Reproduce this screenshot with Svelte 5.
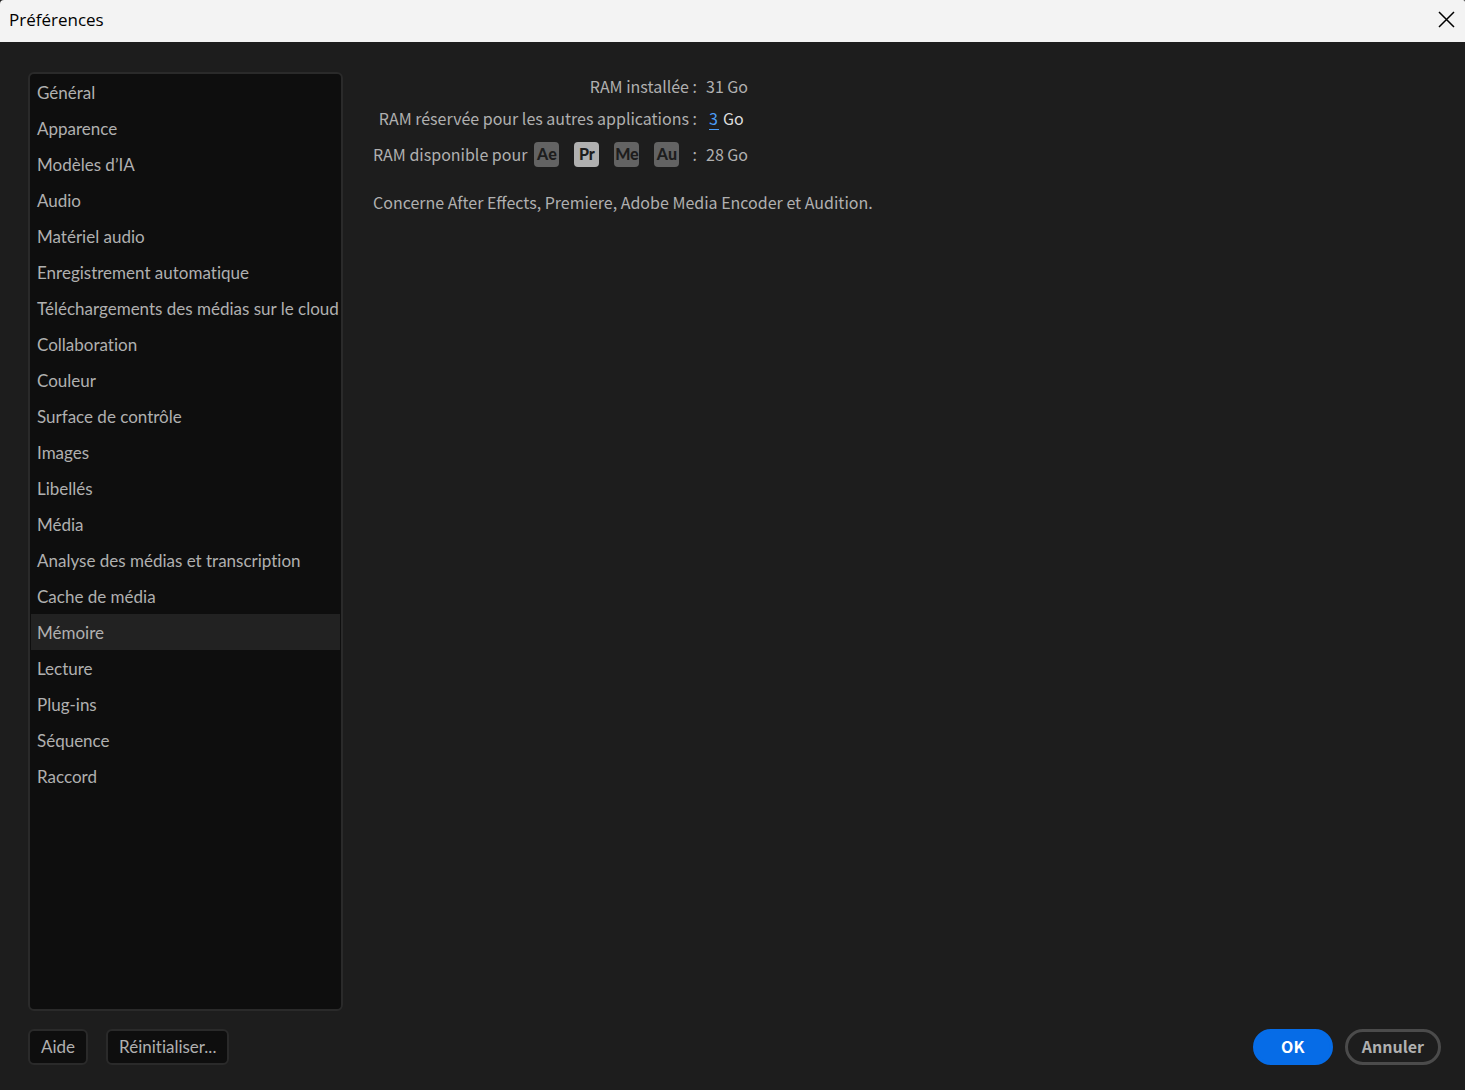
<script>
  const sections = [
    'Général',
    'Apparence',
    'Modèles d’IA',
    'Audio',
    'Matériel audio',
    'Enregistrement automatique',
    'Téléchargements des médias sur le cloud',
    'Collaboration',
    'Couleur',
    'Surface de contrôle',
    'Images',
    'Libellés',
    'Média',
    'Analyse des médias et transcription',
    'Cache de média',
    'Mémoire',
    'Lecture',
    'Plug-ins',
    'Séquence',
    'Raccord',
  ]
  const apps = ['Ae', 'Pr', 'Me', 'Au']
  const currentApp = 'Pr'
  const installed = 31

  let selected = $state('Mémoire')
  let reserved = $state('3')
  let available = $derived(installed - (parseInt(reserved) || 0))
</script>

<div class="window">
  <header class="titlebar">
    <h1>Préférences</h1>
    <button class="close" aria-label="Fermer">
      <svg width="17" height="17" viewBox="0 0 17 17" aria-hidden="true">
        <path d="M1 1l15 15M16 1L1 16" fill="none" stroke="currentColor" stroke-width="1.5" />
      </svg>
    </button>
  </header>

  <div class="body">
    <nav class="sections">
      {#each sections as section}
        <button
          class="section"
          class:selected={section === selected}
          onclick={() => (selected = section)}
        >
          {section}
        </button>
      {/each}
    </nav>

    <main>
      <div class="memory">
        <span class="label">RAM installée :</span>
        <span>{installed} Go</span>

        <label class="label" for="reserved">RAM réservée pour les autres applications :</label>
        <span class="reserved">
          <input id="reserved" type="text" inputmode="numeric" bind:value={reserved} />
          Go
        </span>

        <span class="label available">
          <span>RAM disponible pour</span>
          <span class="apps">
            {#each apps as app}
              <span class="app" class:current={app === currentApp}>{app}</span>
            {/each}
          </span>
          <span class="colon">:</span>
        </span>
        <span>{available} Go</span>
      </div>
      <p>Concerne After Effects, Premiere, Adobe Media Encoder et Audition.</p>
    </main>
  </div>

  <footer>
    <button class="small">Aide</button>
    <button class="small">Réinitialiser...</button>
    <span class="spacer"></span>
    <button class="pill primary">OK</button>
    <button class="pill">Annuler</button>
  </footer>
</div>

<style>
  :global(body) {
    background: #1d1d1d;
  }

  .window {
    box-sizing: border-box;
    min-height: 100vh;
    display: flex;
    flex-direction: column;
    background: #1d1d1d;
    color: #b0b0b0;
    font-family: Lato, 'Noto Sans', sans-serif;
    font-size: 17px;
    line-height: 24px;
  }

  button,
  input {
    font: inherit;
    color: inherit;
    margin: 0;
  }

  .titlebar {
    display: flex;
    align-items: center;
    justify-content: space-between;
    height: 42px;
    padding: 0 10px 3px 9px;
    box-sizing: border-box;
    border-radius: 4px 2px 0 0;
    background: #f3f3f3;
    color: #000;
  }

  h1 {
    margin: 0;
    font-family: 'Open Sans', 'Noto Sans', sans-serif;
    font-size: 17px;
    font-weight: 400;
  }

  .close {
    display: flex;
    padding: 0;
    border: 0;
    background: none;
  }

  .body {
    flex: 1;
    display: flex;
    gap: 30px;
    padding: 30px 28px 0;
  }

  .sections {
    flex: none;
    box-sizing: border-box;
    width: 315px;
    display: flex;
    flex-direction: column;
    padding: 0 1px;
    border: 2px solid #2a2a2a;
    border-radius: 6px;
    background: #0e0e0e;
  }

  .section {
    height: 36px;
    padding: 2px 6px 0;
    border: 0;
    background: none;
    font-variant-ligatures: none;
    text-align: left;
    white-space: nowrap;
  }

  .section.selected {
    background: #222;
  }

  main {
    margin-top: -2px;
    font-family: 'Noto Sans CJK KR', 'Noto Sans', sans-serif;
    font-size: 16px;
  }

  .memory {
    display: grid;
    grid-template-columns: 324px auto;
    grid-template-rows: 32px 32px 40px;
    column-gap: 9px;
    align-items: center;
  }

  .label {
    text-align: right;
    white-space: nowrap;
  }

  .reserved {
    display: flex;
    gap: 4px;
    padding-left: 3px;
    color: #dcdcdc;
  }

  .reserved input {
    box-sizing: border-box;
    width: 10px;
    height: 24px;
    padding: 0;
    border: 0;
    border-bottom: 1px solid #4b9cf5;
    background: none;
    color: #4b9cf5;
  }

  .available {
    display: flex;
    align-items: center;
  }

  .apps {
    display: flex;
    gap: 15px;
    margin-left: 7px;
  }

  .app {
    display: flex;
    align-items: center;
    justify-content: center;
    width: 25px;
    height: 25px;
    border-radius: 4px;
    background: #636363;
    color: #1d1d1d;
    font-family: Lato, 'Noto Sans', sans-serif;
    font-weight: 900;
  }

  .app.current {
    background: #b0b0b0;
  }

  .colon {
    margin-left: auto;
  }

  p {
    margin: 16px 0 0;
  }

  footer {
    display: flex;
    align-items: center;
    padding: 18px 24px 25px 28px;
  }

  .small {
    height: 36px;
    padding: 0 11px;
    margin-right: 18px;
    border: 2px solid #2a2a2a;
    border-radius: 6px;
    background: #0e0e0e;
    font-variant-ligatures: none;
  }

  .spacer {
    flex: 1;
  }

  .pill {
    height: 36px;
    min-width: 80px;
    padding: 0 14px 2px;
    margin-left: 12px;
    border: 3px solid #4b4b4b;
    border-radius: 18px;
    background: none;
    font-family: 'Noto Sans CJK KR', 'Noto Sans', sans-serif;
    font-size: 16px;
    font-weight: 700;
  }

  .pill.primary {
    border-color: #066ce7;
    background: #066ce7;
    color: #fff;
  }
</style>
